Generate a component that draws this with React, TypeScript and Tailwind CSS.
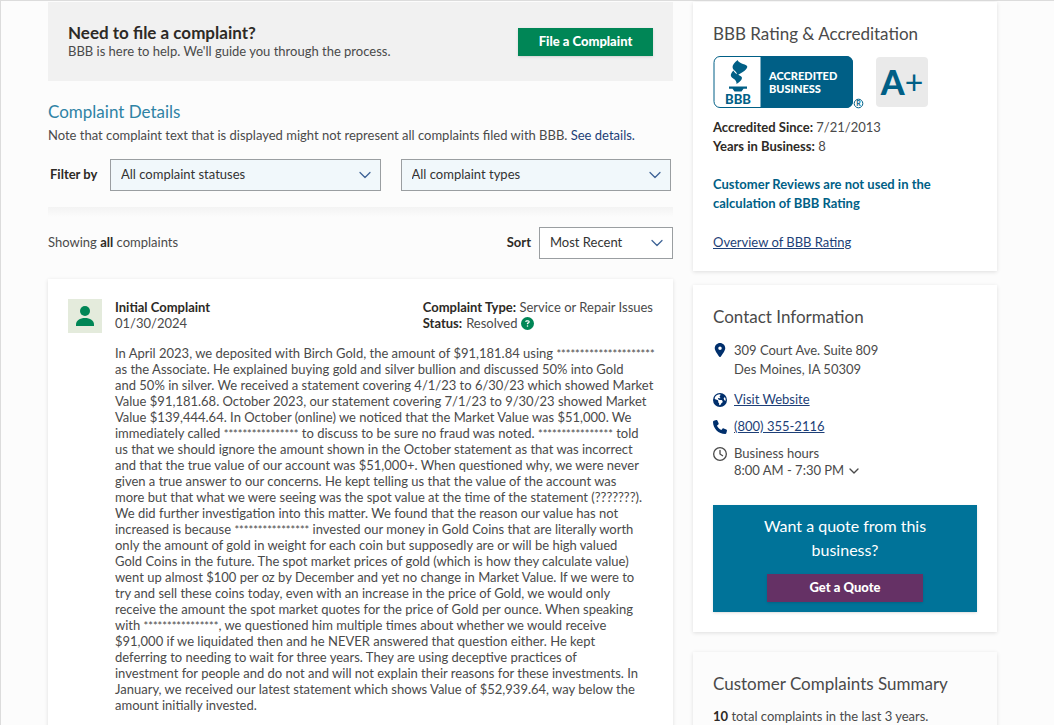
import type { ReactNode } from "react";
import { ChevronDown } from "lucide-react";
import { FaCircleQuestion, FaEarthAmericas, FaLocationDot, FaPhone, FaRegClock } from "react-icons/fa6";

const COMPLAINT_TEXT = `In April 2023, we deposited with Birch Gold, the amount of $91,181.84 using *********************
as the Associate. He explained buying gold and silver bullion and discussed 50% into Gold
and 50% in silver. We received a statement covering 4/1/23 to 6/30/23 which showed Market
Value $91,181.68. October 2023, our statement covering 7/1/23 to 9/30/23 showed Market
Value $139,444.64. In October (online) we noticed that the Market Value was $51,000. We
immediately called **************** to discuss to be sure no fraud was noted. **************** told
us that we should ignore the amount shown in the October statement as that was incorrect
and that the true value of our account was $51,000+. When questioned why, we were never
given a true answer to our concerns. He kept telling us that the value of the account was
more but that what we were seeing was the spot value at the time of the statement (???????).
We did further investigation into this matter. We found that the reason our value has not
increased is because **************** invested our money in Gold Coins that are literally worth
only the amount of gold in weight for each coin but supposedly are or will be high valued
Gold Coins in the future. The spot market prices of gold (which is how they calculate value)
went up almost $100 per oz by December and yet no change in Market Value. If we were to
try and sell these coins today, even with an increase in the price of Gold, we would only
receive the amount the spot market quotes for the price of Gold per ounce. When speaking
with ****************, we questioned him multiple times about whether we would receive
$91,000 if we liquidated then and he NEVER answered that question either. He kept
deferring to needing to wait for three years. They are using deceptive practices of
investment for people and do not and will not explain their reasons for these investments. In
January, we received our latest statement which shows Value of $52,939.64, way below the
amount initially invested.`;

type SelectBoxProps = {
  id: string;
  label?: string;
  options: string[];
  className: string;
};

function SelectBox({ id, label, options, className }: SelectBoxProps) {
  return (
    <div className={`relative ${className}`}>
      <select
        id={id}
        aria-label={label}
        className="block h-8 w-full appearance-none border border-[#9a9ea1] bg-transparent pl-[10px] pr-8 text-[13px] text-[#333]"
      >
        {options.map((option) => (
          <option key={option}>{option}</option>
        ))}
      </select>
      <ChevronDown
        className="pointer-events-none absolute right-[6px] top-[6px] text-[#3f6496]"
        size={20}
        strokeWidth={1.5}
      />
    </div>
  );
}

function Card({ children, className = "" }: { children: ReactNode; className?: string }) {
  return <section className={`shadow-[0_1px_4px_rgba(0,0,0,0.12)] ${className}`}>{children}</section>;
}

// Redacted names come through as runs of asterisks, set a little smaller than the text
function RedactedLine({ text }: { text: string }) {
  return (
    <span className="block whitespace-pre">
      {text.split(/(\*+)/).map((part, index) =>
        part.startsWith("*") ? (
          <span key={index} className="text-[11px] leading-none">{part}</span>
        ) : (
          part
        )
      )}
    </span>
  );
}

function AccreditedSeal() {
  return (
    <svg width="151" height="54" viewBox="0 0 151 54" role="img" aria-label="BBB Accredited Business">
      <rect x="1" y="0.5" width="138.5" height="51" rx="6" fill="#fff" stroke="#005f86" strokeWidth="1" />
      <path d="M47.500 0h86a6.500 6.500 0 0 1 6.500 6.500v39a6.500 6.500 0 0 1-6.500 6.500h-86z" fill="#005f86" />
      {/* torch */}
      <path
        d="M24.500 4c-2.500 2.500-5.500 4.800-4.800 8 .6 2.600 4.800 3.500 4.300 7.500 3.500-2 9.500-5 10.300-8.500.6-3-8.800-3-9.800-7z"
        fill="#005f86"
      />
      <path d="M20.500 14.500c-2 2-3.500 4.500-2 6.500 1.500 1.800 5.500 2.800 5 7 2.500-1.500 5.300-3.800 5.500-6 .2-2.800-7.500-3.500-8.500-7.500z" fill="#005f86" />
      <path d="M16 30.500h18v2.300h-3.500l-2 2.700h-7l-2-2.700H16z" fill="#005f86" />
      <text x="25" y="48" textAnchor="middle" fontFamily="Lato, sans-serif" fontWeight="900" fontSize="13" fill="#005f86">
        BBB
      </text>
      <text x="56" y="24" fontFamily="Lato, sans-serif" fontWeight="900" fontSize="11" fill="#fff">
        ACCREDITED
      </text>
      <text x="56" y="37" fontFamily="Lato, sans-serif" fontWeight="900" fontSize="11" fill="#fff">
        BUSINESS
      </text>
      <circle cx="145.500" cy="47.500" r="4.300" fill="none" stroke="#005f86" strokeWidth="1" />
      <text x="145.500" y="50" textAnchor="middle" fontFamily="Lato, sans-serif" fontWeight="700" fontSize="7" fill="#005f86">
        R
      </text>
    </svg>
  );
}

function PersonIcon() {
  return (
    <div className="flex size-[34px] shrink-0 items-center justify-center bg-[#e4ebdc]">
      <svg width="18" height="20" viewBox="0 0 18 20" fill="#008656" aria-hidden="true">
        <circle cx="9" cy="5" r="5" />
        <path d="M0 20v-1.500C0 14.500 4 12 9 12s9 2.500 9 6.500V20z" />
      </svg>
    </div>
  );
}

function ComplaintsColumn() {
  return (
    <main className="min-w-0 flex-1">
      <div className="flex items-start justify-between bg-[#f1f1f1] px-5 py-[21px]">
        <div>
          <h2 className="text-[17px] font-bold leading-5 text-[#2d2a26]">Need to file a complaint?</h2>
          <p className="leading-[17px]">BBB is here to help. We'll guide you through the process.</p>
        </div>
        <button className="mt-[5px] h-7 w-[135px] bg-[#008656] text-[13px] font-black text-white shadow-sm">
          File a Complaint
        </button>
      </div>

      <h2 className="mt-5 text-[17px] leading-[22px] text-[#2f83a5]">Complaint Details</h2>
      <p className="mt-1 leading-4">
        Note that complaint text that is displayed might not represent all complaints filed with BBB.{" "}
        <a href="#details" className="text-[#1d3f77]">See details.</a>
      </p>

      <div className="mt-4 flex items-center pr-[2px]">
        <span className="w-[62px] shrink-0 pl-[2px] font-bold text-[#2d2a26]">Filter by</span>
        <div className="flex flex-1 gap-5">
          <SelectBox id="status" label="Complaint status" options={["All complaint statuses"]} className="flex-1 bg-[#f1f8fb]" />
          <SelectBox id="type" label="Complaint type" options={["All complaint types"]} className="flex-1 bg-[#f1f8fb]" />
        </div>
      </div>

      <div className="mt-4 h-[10px] bg-linear-to-b from-[#f3f3f3] to-[#fcfcfc]" />

      <div className="mt-[10px] flex items-center justify-between">
        <p>
          Showing <b className="text-[#2d2a26]">all</b> complaints
        </p>
        <div className="flex items-center gap-2">
          <label htmlFor="sort" className="font-bold text-[#2d2a26]">Sort</label>
          <SelectBox id="sort" options={["Most Recent"]} className="w-[134px] bg-white" />
        </div>
      </div>

      <Card className="mt-5 flex gap-[13px] bg-white p-5">
        <PersonIcon />
        <div className="min-w-0 flex-1 leading-4">
          <div className="flex justify-between">
            <div>
              <h3 className="font-bold text-[#2d2a26]">Initial Complaint</h3>
              <p>01/30/2024</p>
            </div>
            <div>
              <p>
                <b className="text-[#2d2a26]">Complaint Type:</b> Service or Repair Issues
              </p>
              <p className="flex items-center gap-1">
                <b className="text-[#2d2a26]">Status:</b> Resolved
                <FaCircleQuestion className="text-[#008656]" size={13} />
              </p>
            </div>
          </div>
          <p className="mt-[14px]">
            {COMPLAINT_TEXT.split("\n").map((line) => (
              <RedactedLine key={line} text={line} />
            ))}
          </p>
        </div>
      </Card>
    </main>
  );
}

function Sidebar() {
  return (
    <aside className="w-[304px] shrink-0">
      <Card className="bg-white px-5 pb-[19px] pt-5">
        <h2 className="text-[17px] leading-6">BBB Rating &amp; Accreditation</h2>
        <div className="mt-[10px] flex items-start gap-3">
          <AccreditedSeal />
          <div className="mt-px flex h-[50px] w-[52px] items-center justify-center rounded bg-[#eaeaea] text-[#005f86]">
            <span className="text-[34px] font-black leading-none">A</span>
            <span className="text-[32px] leading-none">+</span>
          </div>
        </div>
        <div className="mt-2 leading-[19px]">
          <p>
            <b className="text-[#2d2a26]">Accredited Since:</b> 7/21/2013
          </p>
          <p>
            <b className="text-[#2d2a26]">Years in Business:</b> 8
          </p>
          <p className="mt-[19px] font-bold text-[#005f86]">
            Customer Reviews are not used in the calculation of BBB Rating
          </p>
          <a href="#rating" className="mt-5 inline-block text-[#1d3f77] underline">Overview of BBB Rating</a>
        </div>
      </Card>

      <Card className="mt-[14px] bg-white p-5">
        <h2 className="text-[17px] leading-6">Contact Information</h2>
        <div className="mt-3 flex gap-[7px] leading-[19px]">
          <FaLocationDot className="mt-[2px] text-[#002f6c]" size={14} />
          <address className="not-italic">
            309 Court Ave. Suite 809
            <br />
            Des Moines, IA 50309
          </address>
        </div>
        <div className="mt-[11px] flex items-center gap-[7px] leading-[19px]">
          <FaEarthAmericas className="text-[#002f6c]" size={14} />
          <a href="#website" className="text-[#1d3f77] underline">Visit Website</a>
        </div>
        <div className="mt-2 flex items-center gap-[7px] leading-[19px]">
          <FaPhone className="text-[#002f6c]" size={14} />
          <a href="tel:8003552116" className="text-[#1d3f77] underline">(800) 355-2116</a>
        </div>
        <div className="mt-[9px] flex gap-[7px] leading-[17px]">
          <FaRegClock className="mt-[2px]" size={14} />
          <div>
            <p>Business hours</p>
            <button className="flex items-center gap-[2px]">
              8:00 AM - 7:30 PM <ChevronDown size={16} />
            </button>
          </div>
        </div>

        <div className="mt-[26px] bg-[#007399] pb-[10px] pt-[9px] text-center shadow-sm">
          <p className="mx-auto w-[200px] text-[16px] leading-6 text-white">Want a quote from this business?</p>
          <button className="mt-3 h-7 w-[156px] bg-[#653165] text-[13px] font-black text-white shadow-sm">
            Get a Quote
          </button>
        </div>
      </Card>

      <Card className="mt-5 p-5">
        <h2 className="text-[17px] leading-6">Customer Complaints Summary</h2>
        <p className="mt-[11px] leading-[19px]">
          <b className="text-[#2d2a26]">10</b> total complaints in the last 3 years.
        </p>
      </Card>
    </aside>
  );
}

export default function App() {
  return (
    <div className="min-h-screen border-l border-t border-[#dcdcdc] bg-[#fcfcfc] font-['Lato',sans-serif] text-[13px] text-[#4a4a4a]">
      <div className="flex gap-5 pl-[47px] pr-[57px] pt-px">
        <ComplaintsColumn />
        <Sidebar />
      </div>
    </div>
  );
}
